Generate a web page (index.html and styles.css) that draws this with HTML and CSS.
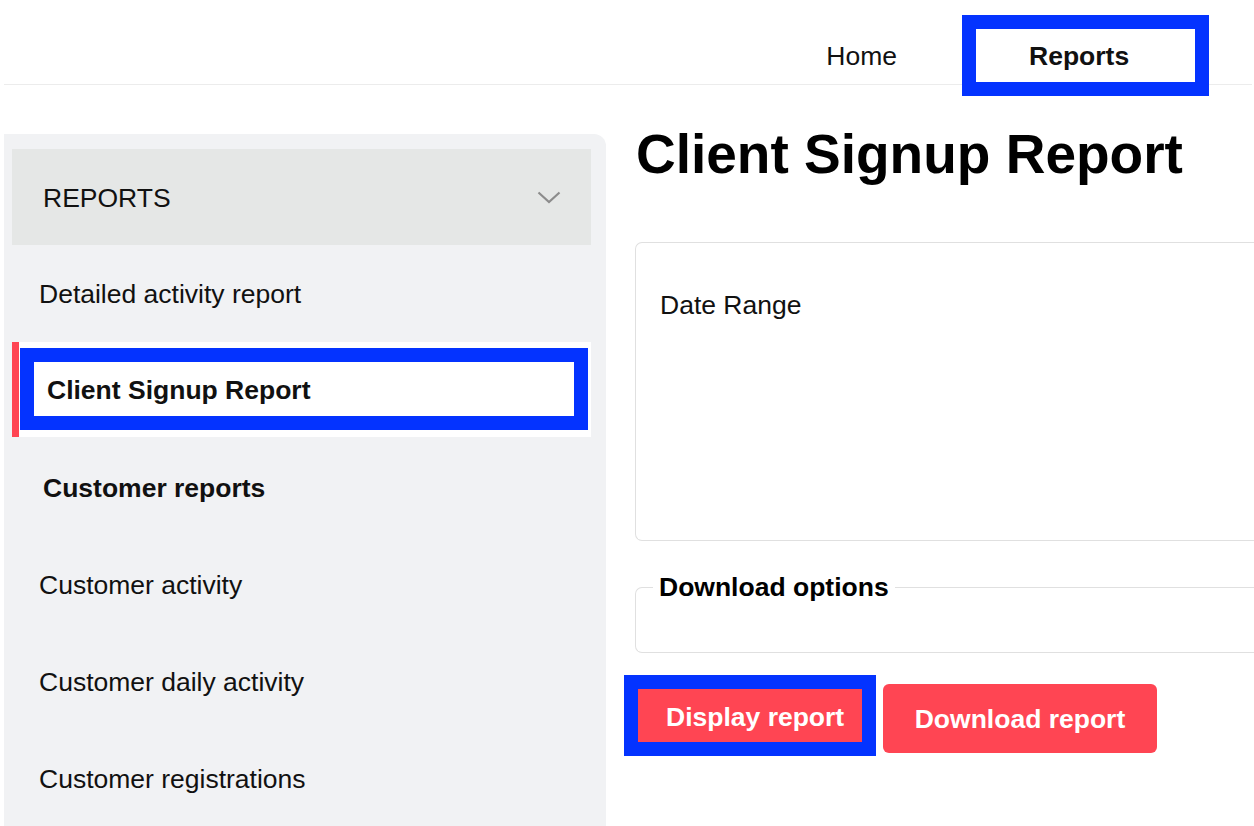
FILE: index.html
```html
<!DOCTYPE html>
<html lang="en">
<head>
<meta charset="utf-8">
<title>Client Signup Report</title>
<link rel="stylesheet" href="styles.css">
</head>
<body>
<header class="topbar">
  <nav class="topnav">
    <a class="topnav-link" href="#">Home</a>
    <div class="focus-ring topnav-focus">
      <a class="topnav-link topnav-link--active" href="#">Reports</a>
    </div>
  </nav>
</header>
<div class="layout">
  <aside class="sidebar">
    <div class="sidebar-head">
      <span class="sidebar-head-title">REPORTS</span>
      <svg class="chevron" width="24" height="13" viewBox="0 0 24 13" aria-hidden="true">
        <path d="M1.5 1.5 L12 11 L22.5 1.5" fill="none" stroke="#8c8c8c" stroke-width="2.2"/>
      </svg>
    </div>
    <a class="side-item" href="#">Detailed activity report</a>
    <div class="side-item side-item--active">
      <div class="focus-ring side-focus">Client Signup Report</div>
    </div>
    <div class="side-item side-item--group">Customer reports</div>
    <a class="side-item" href="#">Customer activity</a>
    <a class="side-item" href="#">Customer daily activity</a>
    <a class="side-item" href="#">Customer registrations</a>
  </aside>
  <main class="main">
    <h1 class="page-title">Client Signup Report</h1>
    <section class="panel">
      <div class="panel-label">Date Range</div>
    </section>
    <fieldset class="options">
      <legend class="options-legend">Download options</legend>
    </fieldset>
    <div class="actions">
      <div class="focus-ring btn-focus">
        <button class="btn btn--display" type="button">Display report</button>
      </div>
      <button class="btn btn--download" type="button">Download report</button>
    </div>
  </main>
</div>
</body>
</html>
```
FILE: styles.css
```css
* { box-sizing: border-box; }

html, body {
  margin: 0;
  padding: 0;
  background: #fff;
  overflow: hidden;
}

body {
  width: 1254px;
  height: 826px;
  font-family: "Liberation Sans", Arial, Helvetica, sans-serif;
  color: #111;
  font-size: 26.5px;
}

a { color: inherit; text-decoration: none; }

.focus-ring {
  border: 14px solid #0433ff;
}

/* Top bar */
.topbar {
  height: 85px;
  margin: 0 2px 0 4px;
  border-bottom: 1px solid #ececec;
}

.topnav {
  display: flex;
  justify-content: flex-end;
  align-items: flex-start;
  padding-top: 15px;
  padding-right: 43px;
}

.topnav-link {
  line-height: 30px;
  white-space: nowrap;
}

.topnav > .topnav-link {
  margin-top: 26px;
  margin-right: 65px;
}

.topnav-focus {
  position: relative;
  z-index: 1;
  width: 247px;
  height: 81px;
  background: #fff;
  display: flex;
  align-items: center;
  padding-left: 53px;
}

.topnav-link--active {
  font-weight: bold;
}

/* Layout */
.layout {
  display: flex;
  margin-top: 49px;
  padding-left: 4px;
}

/* Sidebar */
.sidebar {
  flex: 0 0 602px;
  height: 700px;
  background: #f1f2f4;
  border-radius: 0 12px 0 0;
  padding: 15px 15px 0 8px;
  display: flex;
  flex-direction: column;
}

.sidebar-head {
  height: 96px;
  background: #e5e7e6;
  display: flex;
  align-items: center;
  justify-content: space-between;
  padding: 2px 30px 0 31px;
}

.sidebar-head-title {
  color: #111;
}

.chevron { display: block; margin-top: -2px; }

.side-item {
  height: 97px;
  display: flex;
  align-items: center;
  padding-left: 27px;
  padding-top: 2px;
  white-space: nowrap;
}

.side-item--active {
  height: 95px;
  background: #fff;
  border-left: 7px solid #ff4553;
  padding: 6px 3px 7px 1px;
}

.side-focus {
  flex: 1;
  height: 82px;
  background: #fff;
  display: flex;
  align-items: center;
  padding-left: 13px;
  padding-top: 2px;
  font-weight: bold;
}

.side-item--group {
  font-weight: bold;
  padding-left: 31px;
  padding-top: 5px;
}

.side-item--group ~ .side-item {
  padding-top: 6px;
}

/* Main */
.main {
  flex: 0 0 619px;
  margin-left: 29px;
}

.page-title {
  margin: -7px 0 0 1px;
  font-size: 55px;
  line-height: 55px;
  font-weight: bold;
  color: #000;
  white-space: nowrap;
}

.panel {
  margin-top: 60px;
  height: 299px;
  border: 1px solid #e0e0e0;
  border-right: 0;
  border-radius: 7px 0 0 7px;
  padding: 47px 24px 0;
}

.panel-label {
  line-height: 30px;
}

.options {
  margin: 31px 0 0;
  padding: 0 0 50px 17px;
  border: 1px solid #e0e0e0;
  border-right: 0;
  border-radius: 7px 0 0 7px;
  min-width: 0;
}

.options-legend {
  padding: 0 6px;
  font-weight: bold;
  line-height: 30px;
  color: #000;
}

.actions {
  display: flex;
  align-items: flex-start;
  margin-top: 22px;
  margin-left: -11px;
}

.btn {
  font-family: inherit;
  font-size: 26.5px;
  font-weight: bold;
  color: #fff;
  background: #ff4553;
  border: none;
  cursor: pointer;
  line-height: 30px;
  white-space: nowrap;
}

.btn-focus {
  display: flex;
}

.btn--display {
  width: 224px;
  height: 53px;
  padding: 2px 0 0 28px;
  text-align: left;
  border-radius: 0;
}

.btn--download {
  margin-left: 7px;
  margin-top: 9px;
  width: 274px;
  height: 69px;
  padding: 0;
  border-radius: 6px;
}
```
